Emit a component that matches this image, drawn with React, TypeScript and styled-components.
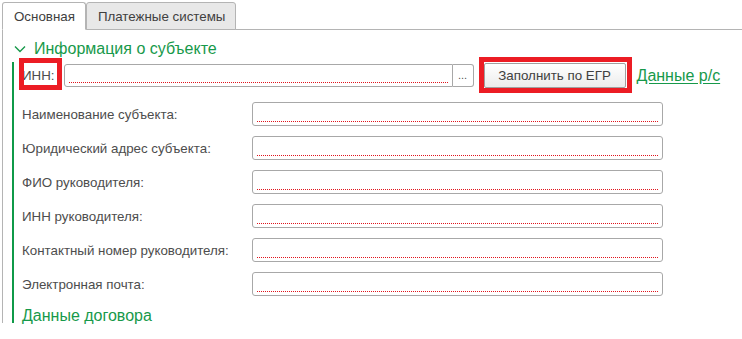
import React from "react";
import styled, { createGlobalStyle } from "styled-components";

const GlobalStyle = createGlobalStyle`
  html, body {
    margin: 0;
    padding: 0;
    background: #ffffff;
  }
  body {
    font-family: "Liberation Sans", Arial, sans-serif;
    font-size: 13.33px;
    color: #4d4d4d;
  }
`;

const Page = styled.div`
  width: 742px;
  height: 339px;
  padding: 2px 0 0 2px;
  box-sizing: border-box;
  overflow: hidden;
`;

const TabBar = styled.div`
  display: flex;
  align-items: flex-end;
  height: 27px;
  border-bottom: 1px solid #b4b4b4;
`;

const Tab = styled.div<{ $active?: boolean }>`
  display: flex;
  align-items: center;
  height: 28px;
  box-sizing: border-box;
  margin-bottom: -1px;
  padding: 0 10px 0 11px;
  border: 1px solid #b4b4b4;
  border-bottom-color: ${(p) => (p.$active ? "#ffffff" : "#b4b4b4")};
  border-radius: 3px 3px 0 0;
  background: ${(p) => (p.$active ? "#ffffff" : "#e8e8e8")};
  color: #404040;
  font-size: 13.33px;
`;

const Panel = styled.div`
  height: 293px;
  box-sizing: border-box;
  border-left: 1px solid #b4b4b4;
  padding: 9px 0 0 9px;
`;

const SectionTitle = styled.div`
  display: flex;
  align-items: center;
  gap: 8px;
  height: 20px;
  padding-left: 2px;
  color: #17994a;
  font-size: 16px;
  line-height: 20px;
`;

const Group = styled.div`
  margin-top: 3px;
  border-left: 2px solid #0f9a48;
  padding: 1px 0 0 8px;
  height: 261px;
  box-sizing: border-box;
`;

const InnRow = styled.div`
  display: flex;
  align-items: center;
  height: 25px;
  margin-bottom: 14px;
`;

const Annotated = styled.span<{ $inset: string }>`
  position: relative;
  &::after {
    content: "";
    position: absolute;
    inset: ${(p) => p.$inset};
    border: 5px solid #ec1c24;
    pointer-events: none;
  }
`;

const InnLabel = styled.span`
  line-height: 16px;
`;

const InputBox = styled.div<{ $width: number }>`
  position: relative;
  width: ${(p) => p.$width}px;
  height: 24px;
  box-sizing: border-box;
  border: 1px solid #a8a8a8;
  border-radius: 3px;
  background: #ffffff;
  &::after {
    content: "";
    position: absolute;
    left: 4px;
    right: 4px;
    bottom: 3px;
    border-bottom: 1px dotted #e0141c;
  }
`;

const InnField = styled.div`
  display: flex;
  height: 23px;
  margin-left: 9px;
`;

const InnInput = styled(InputBox)`
  height: 23px;
  border-radius: 3px 0 0 3px;
`;

const ChoiceButton = styled.div`
  width: 21px;
  height: 23px;
  box-sizing: border-box;
  border: 1px solid #a8a8a8;
  border-left: none;
  border-radius: 0 3px 3px 0;
  color: #555;
  font-size: 11px;
  line-height: 20px;
  text-align: center;
`;

const Button = styled.div`
  width: 142px;
  height: 25px;
  box-sizing: border-box;
  border: 1px solid #a0a0a0;
  border-radius: 2px;
  background: linear-gradient(#ffffff, #ececec);
  color: #404040;
  font-size: 13.33px;
  line-height: 23px;
  text-align: center;
`;

const ButtonWrap = styled(Annotated)`
  margin-left: 10px;
  display: block;
`;

const Link = styled.span`
  margin-left: 11px;
  color: #17994a;
  font-size: 16px;
  text-decoration: underline;
  text-underline-offset: 2px;
`;

const Rows = styled.div`
  display: flex;
  flex-direction: column;
  gap: 10px;
`;

const Row = styled.div`
  display: grid;
  grid-template-columns: 230px 411px;
  align-items: center;
  height: 24px;
`;

const Label = styled.span`
  color: #4d4d4d;
`;

const SubTitle = styled.div`
  margin-top: 11px;
  color: #17994a;
  font-size: 16px;
  line-height: 18px;
`;

const Chevron = () => (
  <svg width="12" height="8" viewBox="0 0 12 8">
    <path d="M1 1.5 L6 6.5 L11 1.5" fill="none" stroke="#17994a" strokeWidth="1.4" />
  </svg>
);

const fields = [
  "Наименование субъекта:",
  "Юридический адрес субъекта:",
  "ФИО руководителя:",
  "ИНН руководителя:",
  "Контактный номер руководителя:",
  "Электронная почта:",
];

export default function App() {
  return (
    <>
      <GlobalStyle />
      <Page>
        <TabBar>
          <Tab $active>Основная</Tab>
          <Tab>Платежные системы</Tab>
        </TabBar>
        <Panel>
          <SectionTitle>
            <Chevron />
            Информация о субъекте
          </SectionTitle>
          <Group>
            <InnRow>
              <Annotated $inset="-10px -7px -6px -3px">
                <InnLabel>ИНН:</InnLabel>
              </Annotated>
              <InnField>
                <InnInput $width={389} />
                <ChoiceButton>...</ChoiceButton>
              </InnField>
              <ButtonWrap $inset="-6px -6px -5px -5px">
                <Button>Заполнить по ЕГР</Button>
              </ButtonWrap>
              <Link>Данные р/с</Link>
            </InnRow>
            <Rows>
              {fields.map((f) => (
                <Row key={f}>
                  <Label>{f}</Label>
                  <InputBox $width={411} />
                </Row>
              ))}
            </Rows>
            <SubTitle>Данные договора</SubTitle>
          </Group>
        </Panel>
      </Page>
    </>
  );
}
